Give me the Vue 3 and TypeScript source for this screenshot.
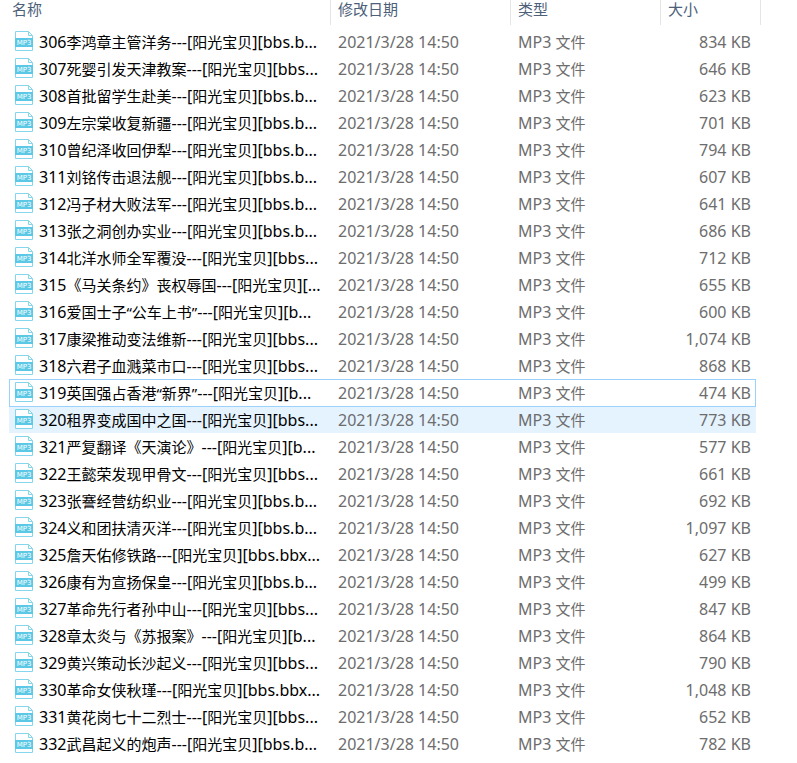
<script setup lang="ts">
interface FileRow {
  no: string
  title: string
  rest: string
  size: string
  state?: 'focused' | 'hovered'
}

const modified = '2021/3/28 14:50'

const files: FileRow[] = [
  { no: '306', title: '李鸿章主管洋务', rest: '[bbs.b...', size: '834 KB' },
  { no: '307', title: '死婴引发天津教案', rest: '[bbs...', size: '646 KB' },
  { no: '308', title: '首批留学生赴美', rest: '[bbs.b...', size: '623 KB' },
  { no: '309', title: '左宗棠收复新疆', rest: '[bbs.b...', size: '701 KB' },
  { no: '310', title: '曾纪泽收回伊犁', rest: '[bbs.b...', size: '794 KB' },
  { no: '311', title: '刘铭传击退法舰', rest: '[bbs.b...', size: '607 KB' },
  { no: '312', title: '冯子材大败法军', rest: '[bbs.b...', size: '641 KB' },
  { no: '313', title: '张之洞创办实业', rest: '[bbs.b...', size: '686 KB' },
  { no: '314', title: '北洋水师全军覆没', rest: '[bbs...', size: '712 KB' },
  { no: '315', title: '《马关条约》丧权辱国', rest: '[...', size: '655 KB' },
  { no: '316', title: '爱国士子“公车上书”', rest: '[b...', size: '600 KB' },
  { no: '317', title: '康梁推动变法维新', rest: '[bbs...', size: '1,074 KB' },
  { no: '318', title: '六君子血溅菜市口', rest: '[bbs...', size: '868 KB' },
  { no: '319', title: '英国强占香港“新界”', rest: '[b...', size: '474 KB', state: 'focused' },
  { no: '320', title: '租界变成国中之国', rest: '[bbs...', size: '773 KB', state: 'hovered' },
  { no: '321', title: '严复翻译《天演论》', rest: '[b...', size: '577 KB' },
  { no: '322', title: '王懿荣发现甲骨文', rest: '[bbs...', size: '661 KB' },
  { no: '323', title: '张謇经营纺织业', rest: '[bbs.b...', size: '692 KB' },
  { no: '324', title: '义和团扶清灭洋', rest: '[bbs.b...', size: '1,097 KB' },
  { no: '325', title: '詹天佑修铁路', rest: '[bbs.bbx...', size: '627 KB' },
  { no: '326', title: '康有为宣扬保皇', rest: '[bbs.b...', size: '499 KB' },
  { no: '327', title: '革命先行者孙中山', rest: '[bbs...', size: '847 KB' },
  { no: '328', title: '章太炎与《苏报案》', rest: '[b...', size: '864 KB' },
  { no: '329', title: '黄兴策动长沙起义', rest: '[bbs...', size: '790 KB' },
  { no: '330', title: '革命女侠秋瑾', rest: '[bbs.bbx...', size: '1,048 KB' },
  { no: '331', title: '黄花岗七十二烈士', rest: '[bbs...', size: '652 KB' },
  { no: '332', title: '武昌起义的炮声', rest: '[bbs.b...', size: '782 KB' },
]
</script>

<template>
  <main class="explorer">
    <table class="files">
      <colgroup>
        <col />
        <col class="col-date" />
        <col class="col-type" />
        <col class="col-size" />
        <col class="col-end" />
      </colgroup>
      <thead>
        <tr>
          <th scope="col"><div class="head head-name">名称</div></th>
          <th scope="col"><div class="head">修改日期</div></th>
          <th scope="col"><div class="head">类型</div></th>
          <th scope="col" colspan="2"><div class="head">大小</div></th>
        </tr>
      </thead>
      <tbody>
        <tr v-for="f in files" :key="f.no" :class="f.state">
          <td>
            <div class="name">
              <svg class="icon" width="18" height="20" viewBox="0 0 18 20" aria-hidden="true">
                <path d="M.5 .5H13.5L17.5 4.5V19.5H.5Z" fill="#fff" stroke="#83d6eb" />
                <path d="M13.5 .5V4.5H17.5" fill="none" stroke="#83d6eb" />
                <rect x="0" y="7" width="18" height="9" fill="#5bc9e6" />
                <text x="9" y="14" text-anchor="middle" class="icon-text">MP3</text>
              </svg>
              <span class="label"><span class="latin">{{ f.no }}</span>{{ f.title }}<span class="latin">---[</span>阳光宝贝<span class="latin">]{{ f.rest }}</span></span>
            </div>
          </td>
          <td class="meta"><span class="latin">{{ modified }}</span></td>
          <td class="meta"><span class="latin">MP3 </span>文件</td>
          <td class="meta size"><span class="latin">{{ f.size }}</span></td>
        </tr>
      </tbody>
    </table>
  </main>
</template>

<style>
body {
  margin: 0;
  background: #fff;
}
</style>

<style scoped>
.explorer {
  padding: 0 36px 0 9px;
  font-family: "Noto Sans", "Noto Sans CJK SC", sans-serif;
  font-size: 15px;
  line-height: 18px;
  color: #000;
}
.files {
  width: 100%;
  table-layout: fixed;
  border-collapse: separate;
  border-spacing: 0;
}
.col-date {
  width: 180px;
}
.col-type {
  width: 150px;
}
.col-size {
  width: 95px;
}
.col-end {
  width: 5px;
}
th {
  padding: 0 0 3px;
  font-weight: 400;
  text-align: left;
  color: #4c607a;
}
.head {
  box-sizing: border-box;
  height: 25px;
  padding-left: 7px;
  border-right: 1px solid #e5e5e5;
}
.head-name {
  padding-left: 3px;
}
td {
  height: 27px;
  padding: 0;
  white-space: nowrap;
  vertical-align: middle;
}
.name {
  display: flex;
  align-items: flex-start;
  gap: 6px;
  padding-left: 6px;
  overflow: hidden;
}
.icon {
  flex: none;
}
.icon-text {
  font: 7px "DejaVu Sans", sans-serif;
  fill: #fff;
}
.label {
  line-height: 22px;
}
.latin {
  font-size: 16px;
}
.meta {
  padding-left: 7px;
  line-height: 22px;
  color: #6d6d6d;
}
.size {
  padding: 0 5px 0 0;
  text-align: right;
}
.hovered td {
  background: #e5f3ff;
}
.focused {
  position: relative;
  z-index: 1;
}
.focused td {
  box-shadow: inset 0 1px #99d1ff, 0 1px #99d1ff;
}
.focused td:first-child {
  box-shadow: inset 1px 1px #99d1ff, 0 1px #99d1ff;
}
.focused td:last-child {
  box-shadow: inset -1px 1px #99d1ff, 0 1px #99d1ff;
}
</style>
